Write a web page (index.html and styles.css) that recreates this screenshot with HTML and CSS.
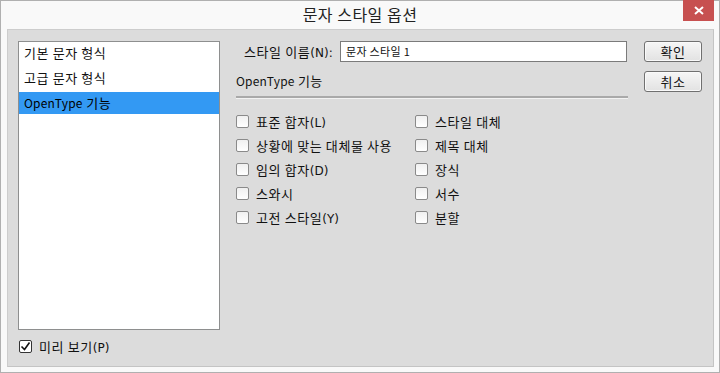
FILE: index.html
```html
<!DOCTYPE html>
<html>
	<head>
		<meta charset="UTF-8">
		<title>문자 스타일 옵션</title>
		<link rel="stylesheet" href="styles.css">
	</head>
	<body>
		<div class="win">
			<div class="titlebar">
				<span class="title">문자 스타일 옵션</span>
				<div class="close">
					<svg width="10" height="9" viewBox="0 0 10 9"><path d="M1 1L9 8M9 1L1 8" stroke="#fff" stroke-width="2"/></svg>
				</div>
			</div>
			<div class="panel">
				<div class="side">
					<div class="list">
						<div class="item">기본 문자 형식</div>
						<div class="item">고급 문자 형식</div>
						<div class="item sel"><span class="lat">OpenType</span> 기능</div>
					</div>
					<label class="chk preview">
						<span class="box on">
							<svg width="11" height="11" viewBox="0 0 11 11"><path d="M1.5 5.5L4.5 8.5L9.5 1.5" fill="none" stroke="#111" stroke-width="1.6"/></svg>
						</span>
						<span>미리 보기<em>(P)</em></span>
					</label>
				</div>
				<div class="main">
					<div class="namerow">
						<span class="lbl">스타일 이름<em>(N):</em></span>
						<div class="field">문자 스타일 1</div>
					</div>
					<div class="section"><span class="lat">OpenType</span> 기능</div>
					<div class="sep"></div>
					<div class="opts">
						<label class="chk"><span class="box"></span><span>표준 합자<em>(L)</em></span></label>
						<label class="chk"><span class="box"></span><span>스타일 대체</span></label>
						<label class="chk"><span class="box"></span><span>상황에 맞는 대체물 사용</span></label>
						<label class="chk"><span class="box"></span><span>제목 대체</span></label>
						<label class="chk"><span class="box"></span><span>임의 합자<em>(D)</em></span></label>
						<label class="chk"><span class="box"></span><span>장식</span></label>
						<label class="chk"><span class="box"></span><span>스와시</span></label>
						<label class="chk"><span class="box"></span><span>서수</span></label>
						<label class="chk"><span class="box"></span><span>고전 스타일<em>(Y)</em></span></label>
						<label class="chk"><span class="box"></span><span>분할</span></label>
					</div>
				</div>
				<div class="btns">
					<div class="btn">확인</div>
					<div class="btn">취소</div>
				</div>
			</div>
		</div>
	</body>
</html>
```
FILE: styles.css
```css
html,body{
	margin:0;
	padding:0;
}
body{
	font-family:"Noto Sans CJK KR","Noto Sans",sans-serif;
	font-size:13px;
	letter-spacing:0.6px;
	color:#111;
}
em{
	font-style:normal;
	font-family:"DejaVu Sans","Noto Sans CJK KR",sans-serif;
	font-size:12px;
	letter-spacing:0;
}
.lat{
	font-size:12px;
	letter-spacing:0.2px;
}
.win{
	width:720px;
	height:373px;
	box-sizing:border-box;
	border:1px solid #b0b0b0;
	background:#f9f9f9;
	display:flex;
	flex-direction:column;
}
.titlebar{
	height:28px;
	display:flex;
	justify-content:center;
	align-items:center;
	position:relative;
}
.title{
	font-size:16px;
	letter-spacing:0.5px;
	color:#222;
	margin-top:-2px;
}
.close{
	position:absolute;
	right:5px;
	top:-1px;
	width:31px;
	height:21px;
	background:#c75050;
	display:flex;
	align-items:center;
	justify-content:center;
}
.panel{
	flex:1;
	margin:0 5px 5px 6px;
	background:#dcdcdc;
	border:1px solid #cdcdcd;
	border-right-color:#c4c4c4;
	border-bottom-color:#c4c4c4;
	display:flex;
	padding:11px 0 0 10px;
}
.side{
	width:202px;
	display:flex;
	flex-direction:column;
}
.list{
	height:289px;
	box-sizing:border-box;
	background:#fff;
	border:1px solid #8e8f8f;
}
.item{
	height:25px;
	line-height:22px;
	padding-left:5px;
}
.item.sel{
	background:#3399f3;
	height:22px;
	color:#000;
}
.chk{
	display:flex;
	align-items:center;
	height:24px;
	white-space:nowrap;
}
.box{
	width:11px;
	height:11px;
	border:1px solid #8a8a8a;
	border-radius:2px;
	background:linear-gradient(#f0f0f0,#ffffff);
	margin-right:7px;
	display:flex;
	align-items:center;
	justify-content:center;
	flex-shrink:0;
}
.box.on{
	border-color:#333;
	background:#fff;
}
.preview{
	margin-top:4px;
	margin-left:1px;
}
.main{
	width:392px;
	margin-left:16px;
}
.namerow{
	display:flex;
	align-items:center;
	height:21px;
}
.lbl{
	width:96px;
	padding-left:8px;
	white-space:nowrap;
}
.field{
	width:287px;
	height:21px;
	box-sizing:border-box;
	border:1px solid #7b7b7b;
	background:#fff;
	line-height:19px;
	padding-left:5px;
	font-size:11px;
	letter-spacing:0.3px;
}
.section{
	margin-top:9px;
	height:20px;
	line-height:20px;
	letter-spacing:0.3px;
}
.sep{
	margin-top:5px;
	height:2px;
	background:#a9a9a9;
	border-bottom:1px solid #f2f2f2;
}
.opts{
	margin-top:10px;
	display:grid;
	grid-template-columns:179px 180px;
}
.btns{
	margin-left:16px;
	display:flex;
	flex-direction:column;
	gap:9px;
}
.btn{
	width:58px;
	height:21px;
	box-sizing:border-box;
	border:1px solid #707070;
	border-radius:3px;
	background:linear-gradient(#f6f6f6,#e2e2e2);
	text-align:center;
	line-height:19px;
	box-shadow:inset 0 0 0 1px #fafafa;
}
```
